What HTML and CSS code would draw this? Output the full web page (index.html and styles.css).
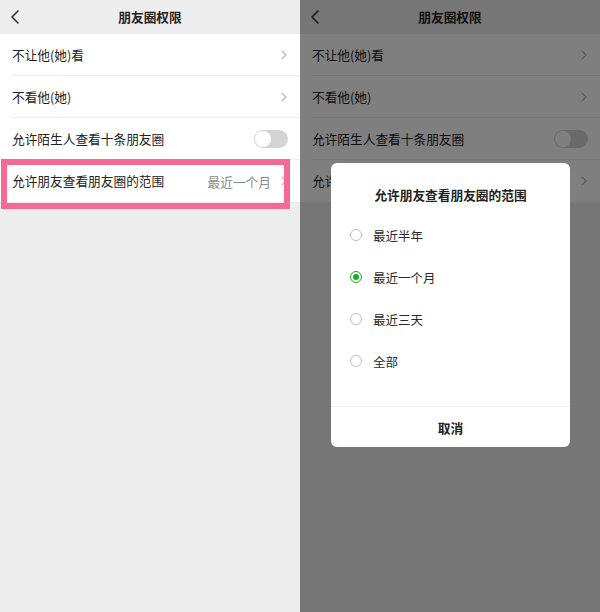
FILE: index.html
```html
<!DOCTYPE html>
<html lang="zh-CN">
<head>
<meta charset="utf-8">
<title>朋友圈权限</title>
<link rel="stylesheet" href="styles.css">
</head>
<body>
<div class="page">
  <section class="panel">
    <header class="nav">
      <svg class="back" width="8" height="14" viewBox="0 0 8 14"><polyline points="7,1 1,7 7,13" fill="none" stroke="#333" stroke-width="1.6" stroke-linecap="round" stroke-linejoin="round"/></svg>
      <h1 class="nav-title">朋友圈权限</h1>
    </header>
    <div class="list">
      <div class="row"><div class="row-inner"><span class="label">不让他(她)看</span><svg class="chev" width="6" height="10" viewBox="0 0 6 10"><polyline points="0.8,0.8 5,5 0.8,9.2" fill="none" stroke="#b5b5b5" stroke-width="1.2"/></svg></div></div>
      <div class="row"><div class="row-inner"><span class="label">不看他(她)</span><svg class="chev" width="6" height="10" viewBox="0 0 6 10"><polyline points="0.8,0.8 5,5 0.8,9.2" fill="none" stroke="#b5b5b5" stroke-width="1.2"/></svg></div></div>
      <div class="row"><div class="row-inner"><span class="label">允许陌生人查看十条朋友圈</span><span class="switch"><span class="knob"></span></span></div></div>
      <div class="row"><div class="row-inner last"><span class="label">允许朋友查看朋友圈的范围</span><span class="value">最近一个月</span><svg class="chev" width="6" height="10" viewBox="0 0 6 10"><polyline points="0.8,0.8 5,5 0.8,9.2" fill="none" stroke="#b5b5b5" stroke-width="1.2"/></svg></div></div>
    </div>
    <div class="highlight"></div>
  </section>

  <section class="panel">
    <header class="nav">
      <svg class="back" width="8" height="14" viewBox="0 0 8 14"><polyline points="7,1 1,7 7,13" fill="none" stroke="#333" stroke-width="1.6" stroke-linecap="round" stroke-linejoin="round"/></svg>
      <h1 class="nav-title">朋友圈权限</h1>
    </header>
    <div class="list">
      <div class="row"><div class="row-inner"><span class="label">不让他(她)看</span><svg class="chev" width="6" height="10" viewBox="0 0 6 10"><polyline points="0.8,0.8 5,5 0.8,9.2" fill="none" stroke="#b5b5b5" stroke-width="1.2"/></svg></div></div>
      <div class="row"><div class="row-inner"><span class="label">不看他(她)</span><svg class="chev" width="6" height="10" viewBox="0 0 6 10"><polyline points="0.8,0.8 5,5 0.8,9.2" fill="none" stroke="#b5b5b5" stroke-width="1.2"/></svg></div></div>
      <div class="row"><div class="row-inner"><span class="label">允许陌生人查看十条朋友圈</span><span class="switch"><span class="knob"></span></span></div></div>
      <div class="row"><div class="row-inner last"><span class="label">允许朋友查看朋友圈的范围</span><span class="value">最近一个月</span><svg class="chev" width="6" height="10" viewBox="0 0 6 10"><polyline points="0.8,0.8 5,5 0.8,9.2" fill="none" stroke="#b5b5b5" stroke-width="1.2"/></svg></div></div>
    </div>
    <div class="mask"></div>
    <div class="dialog">
      <div class="dialog-title">允许朋友查看朋友圈的范围</div>
      <ul class="options">
        <li class="option"><span class="radio"></span><span>最近半年</span></li>
        <li class="option"><span class="radio checked"></span><span>最近一个月</span></li>
        <li class="option"><span class="radio"></span><span>最近三天</span></li>
        <li class="option"><span class="radio"></span><span>全部</span></li>
      </ul>
      <div class="dialog-foot">取消</div>
    </div>
  </section>
</div>
</body>
</html>
```
FILE: styles.css
```css
* { box-sizing: border-box; }
html, body { margin: 0; padding: 0; }
body {
  font-family: "Noto Sans CJK SC", "Noto Sans", sans-serif;
  color: #1e1e1e;
  background: #ededed;
}
.page {
  display: flex;
  width: 600px;
  height: 612px;
}
.panel {
  position: relative;
  width: 300px;
  height: 612px;
  background: #ededed;
  overflow: hidden;
}
.nav {
  height: 34px;
  display: flex;
  align-items: center;
  justify-content: center;
  position: relative;
}
.back {
  position: absolute;
  left: 11px;
  top: 10px;
}
.nav-title {
  margin: 0;
  font-size: 12.7px;
  font-weight: 700;
  color: #222;
  line-height: 20px;
}
.list { background: #fff; }
.row { padding-left: 12px; }
.row-inner {
  height: 42px;
  display: flex;
  align-items: center;
  padding-right: 12px;
  border-bottom: 1px solid #ececec;
}
.row-inner.last { border-bottom: none; }
.label {
  flex: 1;
  font-size: 12.7px;
  line-height: 18px;
  color: #222;
}
.value {
  font-size: 12.7px;
  color: #8a8a8a;
  margin-right: 10px;
}
.chev { display: block; margin-right: 1px; }
.switch {
  width: 34px;
  height: 18px;
  border-radius: 9px;
  background: #d4d4d4;
  position: relative;
  display: block;
}
.knob {
  position: absolute;
  left: 1px;
  top: 1px;
  width: 16px;
  height: 16px;
  border-radius: 50%;
  background: #fff;
}
.highlight {
  position: absolute;
  left: 1px;
  top: 159px;
  width: 289px;
  height: 50px;
  border: 6px solid #f36b94;
}
.mask {
  position: absolute;
  inset: 0;
  background: rgba(0, 0, 0, 0.5);
}
.dialog {
  position: absolute;
  left: 31px;
  top: 163px;
  width: 239px;
  height: 284px;
  background: #fff;
  border-radius: 6px;
  display: flex;
  flex-direction: column;
}
.dialog-title {
  padding-top: 22px;
  height: 51px;
  line-height: 20px;
  text-align: center;
  font-size: 12.7px;
  font-weight: 700;
  color: #222;
}
.options {
  list-style: none;
  margin: 0;
  padding: 0 0 0 19px;
  flex: 1;
}
.option {
  height: 42px;
  display: flex;
  align-items: center;
  gap: 11px;
  font-size: 12.5px;
  color: #2a2a2a;
}
.radio {
  width: 12px;
  height: 12px;
  border-radius: 50%;
  border: 1px solid #bdbdbd;
  display: block;
  position: relative;
}
.radio.checked {
  border: 1.5px solid #1aad19;
}
.radio.checked::after {
  content: "";
  position: absolute;
  left: 1.5px;
  top: 1.5px;
  width: 6px;
  height: 6px;
  border-radius: 50%;
  background: #1aad19;
}
.dialog-foot {
  height: 41px;
  border-top: 1px solid #f0f0f0;
  display: flex;
  align-items: center;
  justify-content: center;
  font-size: 12.7px;
  font-weight: 700;
  color: #222;
}
```
